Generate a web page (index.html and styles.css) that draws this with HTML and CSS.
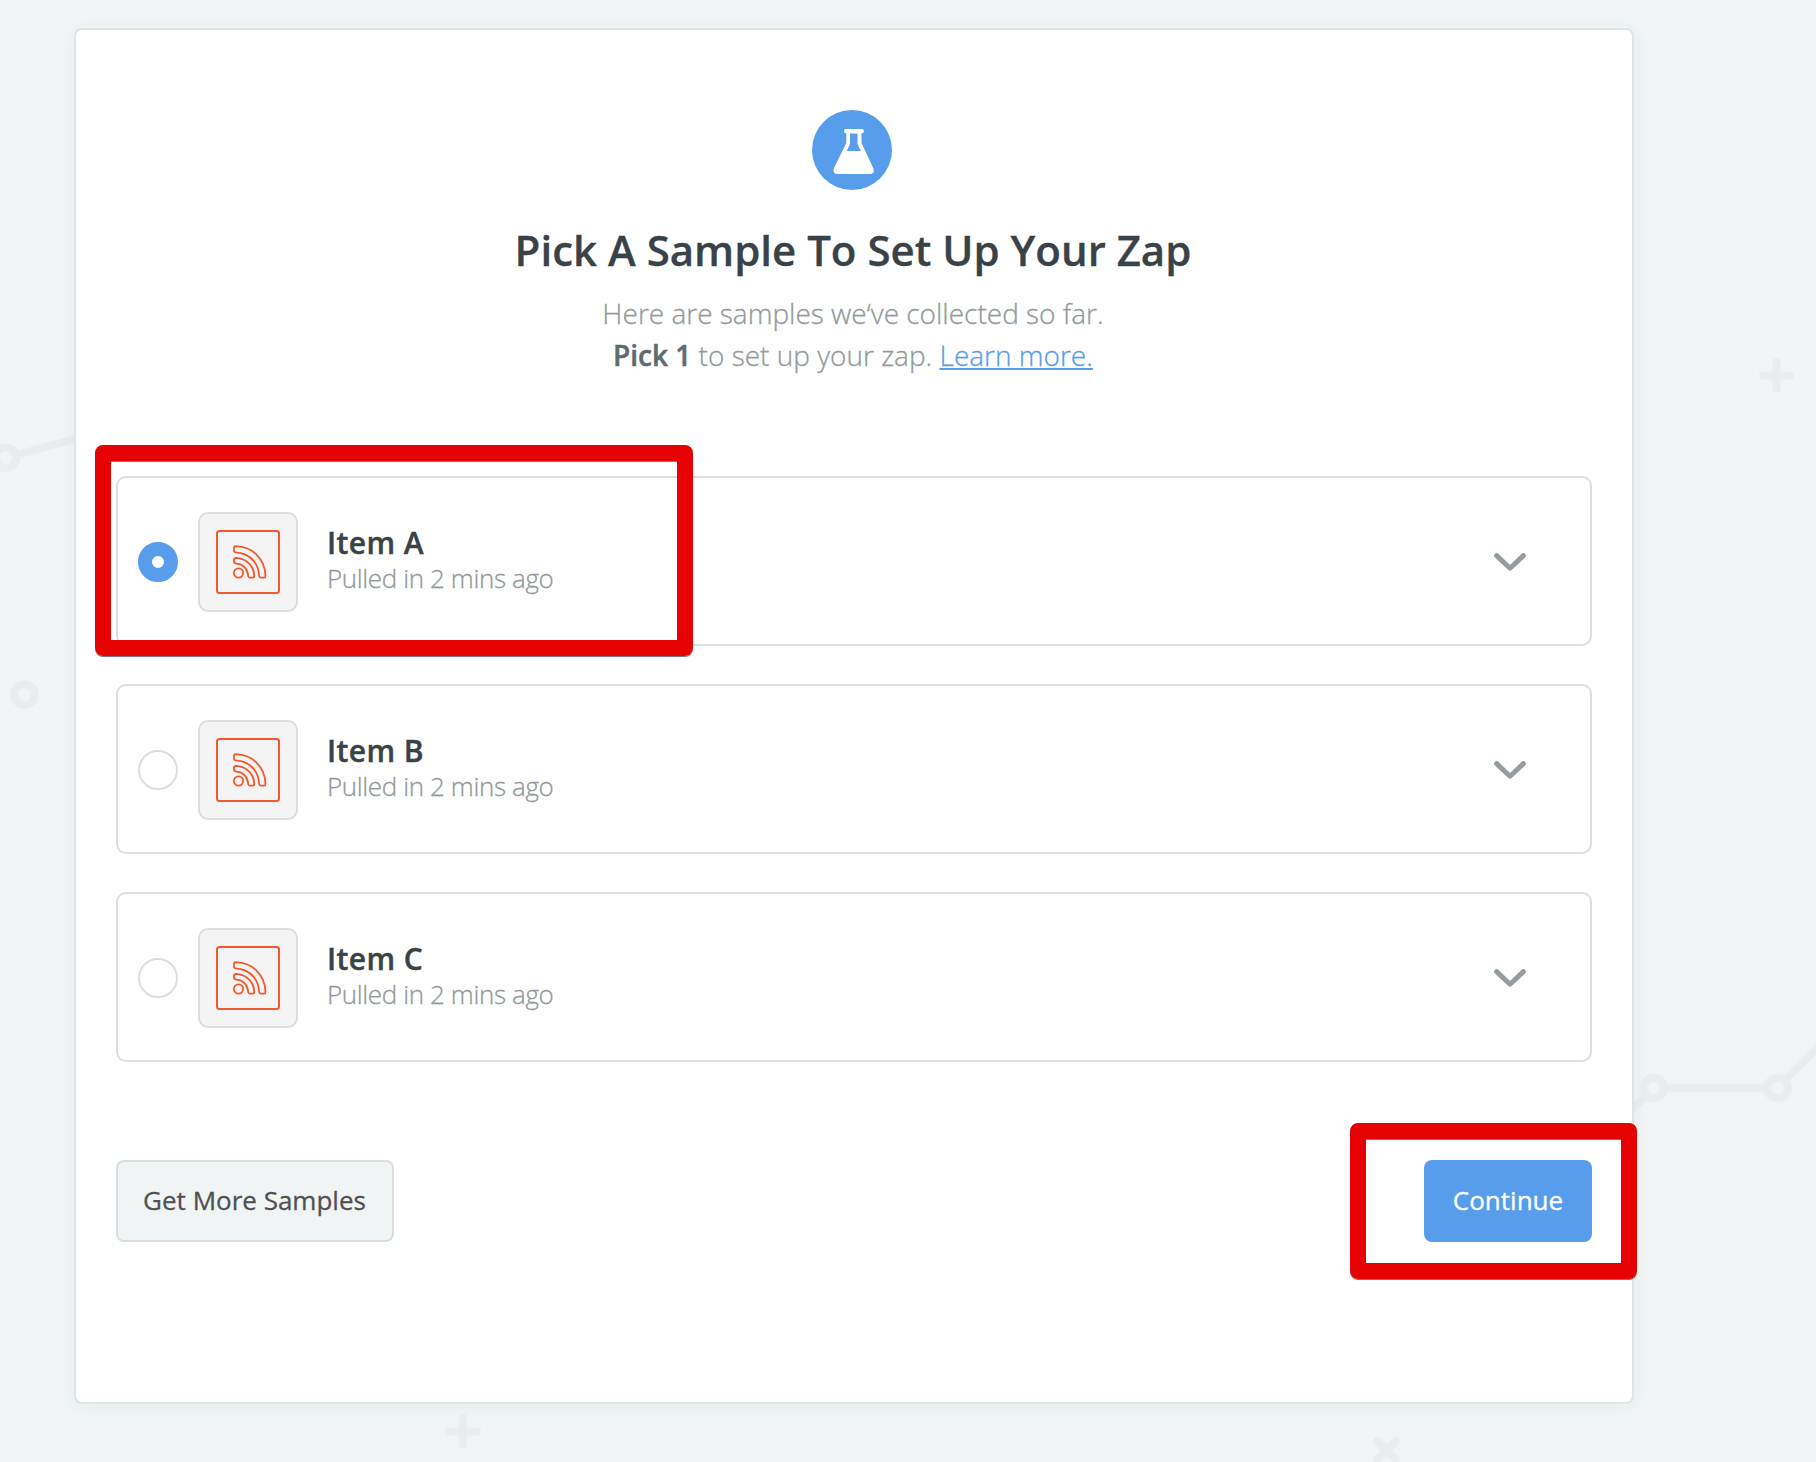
FILE: index.html
```html
<!DOCTYPE html>
<html lang="en">
<head>
<meta charset="utf-8">
<title>Pick A Sample</title>
<link rel="stylesheet" href="styles.css">
</head>
<body>
<svg class="backdrop" width="1816" height="1462" viewBox="0 0 1816 1462" fill="none" stroke="#e9edee" stroke-width="8">
  <circle cx="6" cy="457.700" r="10.300"/><path d="M18 454.500L80 437.500"/>
  <circle cx="24.300" cy="694.700" r="10.300"/>
  <circle cx="1654" cy="1088" r="10.300"/><circle cx="1777.500" cy="1088" r="10.300"/>
  <path d="M1667 1088H1764M1787 1078L1820 1045M1645 1097L1628 1113"/>
  <g stroke-linecap="round"><path d="M1763 375.500H1790M1776.500 362V389M449 1431.500H477M463 1418V1445M1377 1441L1396 1460M1396 1441L1377 1460"/></g>
</svg>
<main class="card">
  <header class="intro">
    <svg class="intro-icon" viewBox="0 0 80 80">
      <circle cx="40" cy="40" r="40" fill="#589dec"/>
      <path fill="#fff" fill-rule="evenodd" d="M34 19H50Q52 19 52 21.100T50 23.300H49.500V33L61.200 58Q63.500 64 57.500 64H26Q20 64 22 58L34.300 33V23.300H34Q32 23.300 32 21.100T34 19ZM38 23.500V34L34.800 41H49L45.500 34V23.500Z"/>
    </svg>
    <h1>Pick A Sample To Set Up Your Zap</h1>
    <p>Here are samples we‘ve collected so far.<br><strong>Pick 1</strong> to set up your zap. <a href="#">Learn more.</a></p>
  </header>

  <svg class="symbols" width="0" height="0">
    <symbol id="rss" viewBox="0 0 64 64">
      <g fill="none" stroke="#f1582c" stroke-linejoin="round">
        <rect x="1" y="1" width="62" height="62" rx="2.500" stroke-width="2"/>
        <g stroke-width="1.800">
          <circle cx="22.500" cy="43" r="4.600"/>
          <path d="M20 16.200C37 17 49 29 49.500 46Q49.500 47.600 48 47.600H44.800Q43.300 47.600 43.200 46C42.500 32 33 23.200 19.500 22.400Q18 22.300 18 20.800V18Q18 16.200 20 16.200Z"/>
          <path d="M20 27.800C30 28.300 37.800 35.500 38.300 46Q38.300 47.600 36.800 47.600H33.700Q32.300 47.600 32.200 46C31.500 38.500 27 34 19.500 33.300Q18 33.100 18 31.700V29.500Q18 27.800 20 27.800Z"/>
        </g>
      </g>
    </symbol>
  </svg>

  <section class="samples">
    <label class="sample">
      <span class="radio radio-on"></span>
      <span class="app"><svg><use href="#rss"/></svg></span>
      <span class="text"><span class="name">Item A</span><span class="time">Pulled in 2 mins ago</span></span>
      <svg class="chevron" viewBox="0 0 32 18"><path d="M2.600 2.600L16 15.200L29.400 2.600"/></svg>
    </label>
    <label class="sample">
      <span class="radio"></span>
      <span class="app"><svg><use href="#rss"/></svg></span>
      <span class="text"><span class="name">Item B</span><span class="time">Pulled in 2 mins ago</span></span>
      <svg class="chevron" viewBox="0 0 32 18"><path d="M2.600 2.600L16 15.200L29.400 2.600"/></svg>
    </label>
    <label class="sample">
      <span class="radio"></span>
      <span class="app"><svg><use href="#rss"/></svg></span>
      <span class="text"><span class="name">Item C</span><span class="time">Pulled in 2 mins ago</span></span>
      <svg class="chevron" viewBox="0 0 32 18"><path d="M2.600 2.600L16 15.200L29.400 2.600"/></svg>
    </label>
  </section>

  <footer class="actions">
    <button class="btn btn-plain">Get More Samples</button>
    <button class="btn btn-primary">Continue</button>
  </footer>
</main>
<div class="mark mark-item"></div>
<div class="mark mark-continue"></div>
</body>
</html>
```
FILE: styles.css
```css
* { box-sizing: border-box; }

body {
  margin: 0;
  height: 1462px;
  padding: 28px 0 0 74px;
  overflow: hidden;
  position: relative;
  background: #f0f4f5;
  font-family: "Open Sans", "Noto Sans", sans-serif;
}

.backdrop { position: absolute; left: 0; top: 0; }
.symbols { display: none; }

.card {
  position: relative;
  width: 1560px;
  height: 1376px;
  padding: 80px 40px 0;
  background: #fff;
  border: 2px solid #dfe4e7;
  border-radius: 8px;
  box-shadow: 0 2px 16px rgba(40, 70, 80, 0.05);
}

.intro {
  display: flex;
  flex-direction: column;
  align-items: center;
  height: 366px;
  text-align: center;
}
.intro-icon { width: 80px; height: 80px; margin-right: 4px; }

h1 {
  margin: 30px 2px 0 0;
  font-size: 42px;
  line-height: 60px;
  font-weight: 600;
  color: #384248;
  -webkit-text-stroke: 0.3px;
  white-space: nowrap;
}
.intro p {
  margin: 12px 2px 0 0;
  font-size: 28px;
  line-height: 42px;
  font-weight: 300;
  color: #919a9d;
  -webkit-text-stroke: 0.3px;
}
.intro strong { font-weight: 600; color: #5f6b6e; -webkit-text-stroke: 0.5px; }
.intro a { color: #589dec; text-decoration-thickness: 2px; text-underline-offset: 2px; text-decoration-skip-ink: none; }

.samples { display: flex; flex-direction: column; gap: 38px; }
.sample {
  display: flex;
  align-items: center;
  height: 170px;
  padding: 2px 64px 0 20px;
  border: 2px solid #d9dee2;
  border-radius: 10px;
}
.radio {
  width: 40px;
  height: 40px;
  border: 2px solid #d9dee2;
  border-radius: 50%;
}
.radio-on { border: 14px solid #589dec; }
.app {
  display: flex;
  width: 100px;
  height: 100px;
  margin-left: 20px;
  padding: 16px;
  background: #f4f4f4;
  border: 2px solid #d9dee2;
  border-radius: 10px;
}
.app svg { width: 64px; height: 64px; }
.text {
  display: flex;
  flex-direction: column;
  margin: -5px auto 0 29px;
}
.name { font-size: 30px; line-height: 38px; font-weight: 600; color: #384248; letter-spacing: 0.4px; -webkit-text-stroke: 0.4px; }
.time { font-size: 26px; line-height: 33px; font-weight: 300; color: #919a9d; letter-spacing: -0.38px; -webkit-text-stroke: 0.3px; }
.chevron {
  width: 32px;
  height: 18px;
  fill: none;
  stroke: #949da1;
  stroke-width: 5;
  stroke-linecap: round;
  stroke-linejoin: round;
}

.actions { display: flex; justify-content: space-between; margin-top: 98px; }
.btn {
  height: 82px;
  padding: 0 0 2px;
  border-radius: 8px;
  font: 400 26px/36px "Open Sans", "Noto Sans", sans-serif;
  -webkit-text-stroke: 0.3px;
}
.btn-plain { width: 278px; padding-right: 1px; color: #505050; background: #f0f4f5; border: 2px solid #d9dee0; }
.btn-primary { width: 168px; color: #fff; background: #589dec; border: 0; }

/* highlight frames laid over the page */
.mark { position: absolute; border-radius: 8px; border: 16px solid #e60202; box-shadow: 0 1px 0 #8d7373, inset 0 1px 0 #8d7373; }
.mark-item { left: 95px; top: 445px; width: 598px; height: 211px; }
.mark-continue { left: 1350px; top: 1123px; width: 287px; height: 156px; }
```
